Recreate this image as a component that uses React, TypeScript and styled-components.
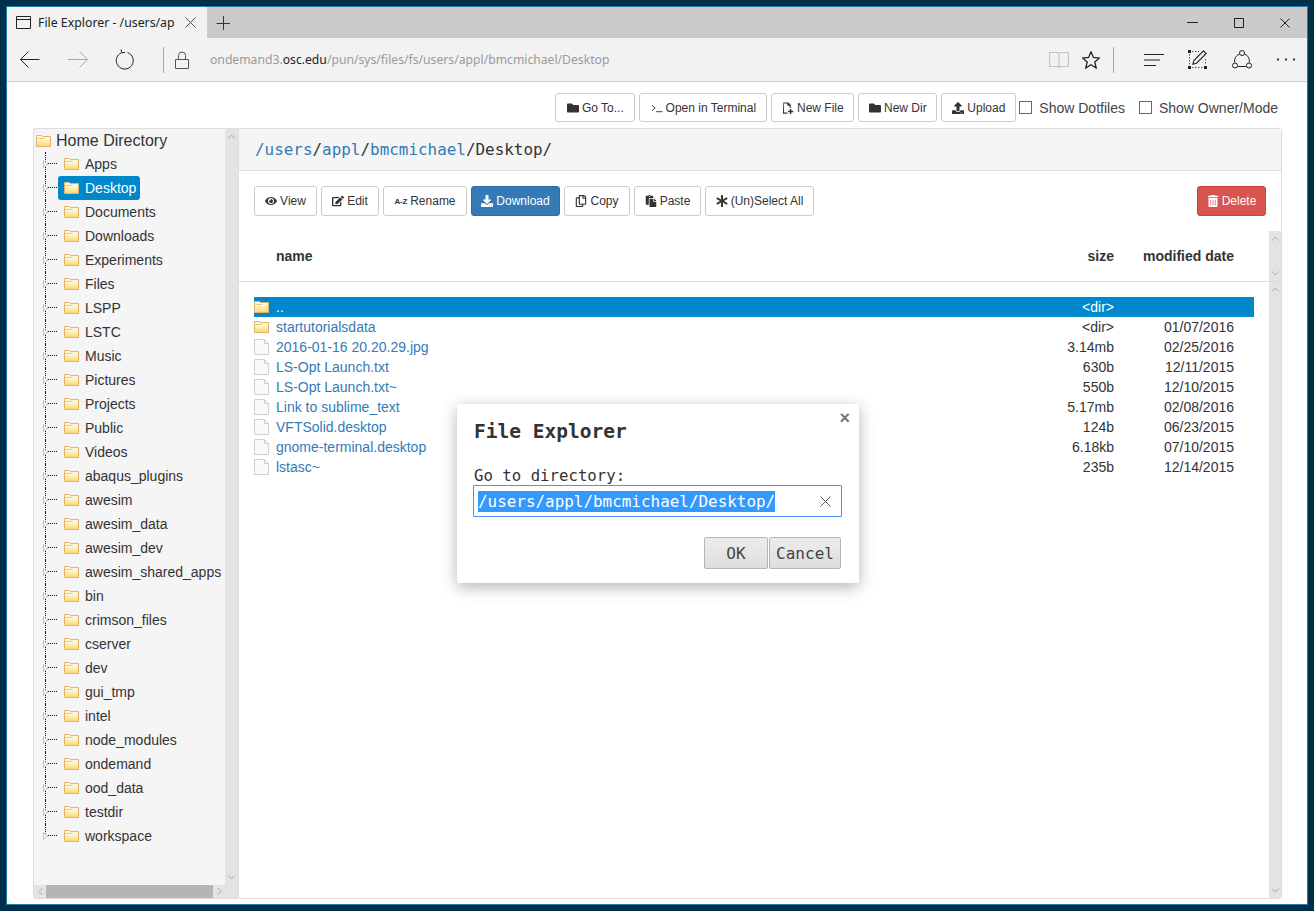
import styled, { createGlobalStyle } from "styled-components";
import {
  FaAsterisk,
  FaDownload,
  FaEdit,
  FaEye,
  FaFolder,
  FaPaste,
  FaRegCopy,
  FaTrashAlt,
  FaUpload,
} from "react-icons/fa";

const GlobalStyle = createGlobalStyle`
  html, body {
    margin: 0;
    padding: 0;
    height: 100%;
    background: #012f47;
    font-family: "Liberation Sans", Arial, sans-serif;
  }
`;

const Frame = styled.div`
  width: 1314px;
  height: 911px;
  box-sizing: border-box;
  padding: 6px;
  background: #012f47;
`;

const Win = styled.div`
  height: 100%;
  box-sizing: border-box;
  border: 1px solid #1b7fa8;
  display: flex;
  flex-direction: column;
  background: #fff;
  position: relative;
`;

const TabStrip = styled.div`
  height: 31px;
  background: #cacaca;
  display: flex;
  align-items: center;
  flex: none;
`;

const Tab = styled.div`
  width: 200px;
  height: 100%;
  box-sizing: border-box;
  background: #f2f2f2;
  display: flex;
  align-items: center;
  padding-left: 9px;
  font-family: "Noto Sans", sans-serif;
  font-size: 12.3px;
  color: #222;
`;

const TabTitle = styled.span`
  margin-left: 7px;
  width: 147px;
  white-space: nowrap;
  overflow: hidden;
`;

const NewTab = styled.div`
  margin-left: 9px;
  display: flex;
`;

const WinControls = styled.div`
  margin-left: auto;
  display: flex;
  align-items: center;
  gap: 36px;
  padding-right: 17px;
`;

const NavBar = styled.div`
  height: 44px;
  box-sizing: border-box;
  flex: none;
  background: #f2f2f2;
  border-bottom: 1px solid #cfcfcf;
  display: flex;
  align-items: center;
  padding-left: 13px;
`;

const NavIcon = styled.div<{ $gap: number }>`
  display: flex;
  margin-left: ${(p) => p.$gap}px;
`;

const NavDivider = styled.div<{ $gap: number }>`
  width: 1px;
  height: 26px;
  background: #a8a8a8;
  margin-left: ${(p) => p.$gap}px;
`;

const Url = styled.div`
  margin-left: 21px;
  font-family: "Noto Sans", sans-serif;
  font-size: 12.18px;
  color: #9a9a9a;
  width: 835px;
  white-space: nowrap;
  b {
    font-weight: 400;
    color: #222;
  }
`;

const Page = styled.div`
  flex: 1;
  min-height: 0;
  display: flex;
  flex-direction: column;
  padding: 11px 25px 5px 26px;
  position: relative;
`;

const TopBar = styled.div`
  height: 29px;
  flex: none;
  margin-bottom: 6px;
  display: flex;
  align-items: center;
  justify-content: flex-end;
  gap: 4px;
  padding-right: 4px;
`;

const Btn = styled.button<{ $kind?: "primary" | "danger"; $w: number }>`
  width: ${(p) => p.$w}px;
  height: 100%;
  box-sizing: border-box;
  padding: 0;
  display: flex;
  align-items: center;
  justify-content: center;
  gap: 3px;
  border-radius: 3px;
  border: 1px solid
    ${(p) =>
      p.$kind === "primary" ? "#2e6da4" : p.$kind === "danger" ? "#d43f3a" : "#ccc"};
  background: ${(p) =>
    p.$kind === "primary" ? "#337ab7" : p.$kind === "danger" ? "#d9534f" : "#fff"};
  color: ${(p) => (p.$kind ? "#fff" : "#333")};
  font-family: "Liberation Sans", Arial, sans-serif;
  font-size: 12px;
  white-space: nowrap;
  svg {
    width: 12px;
    height: 12px;
    flex: none;
  }
`;

const CheckLabel = styled.label<{ $gap: number }>`
  display: flex;
  align-items: center;
  font-size: 14px;
  color: #444;
  margin-left: ${(p) => p.$gap}px;
`;

const CheckBox = styled.span`
  width: 11px;
  height: 11px;
  border: 1px solid #666;
  background: #fff;
  margin-right: 7px;
  display: block;
`;

const Main = styled.div`
  flex: 1;
  min-height: 0;
  display: flex;
`;

const TreePanel = styled.div`
  width: 205px;
  box-sizing: border-box;
  flex: none;
  display: flex;
  flex-direction: column;
  background: #f5f5f5;
  border: 1px solid #ddd;
  border-right: 0;
  border-radius: 3px 0 0 3px;
`;

const TreeBody = styled.div`
  flex: 1;
  min-height: 0;
  display: flex;
`;

const TreeList = styled.div`
  flex: 1;
  min-width: 0;
  overflow: hidden;
`;

const TreeRoot = styled.div`
  height: 23px;
  display: flex;
  align-items: center;
  gap: 5px;
  padding-left: 2px;
  font-size: 16px;
  color: #333;
`;

const TreeRow = styled.div`
  height: 24px;
  display: flex;
  align-items: center;
  padding-left: 11px;
  font-size: 14px;
  color: #333;
`;

const Connector = styled.span<{ $last: boolean }>`
  position: relative;
  width: 13px;
  height: 24px;
  flex: none;
  &::before {
    content: "";
    position: absolute;
    left: 0;
    top: 0;
    height: ${(p) => (p.$last ? "12px" : "24px")};
    border-left: 1px dotted #111;
  }
  &::after {
    content: "";
    position: absolute;
    left: 2px;
    right: 1px;
    top: 11px;
    border-top: 1px dotted #111;
  }
`;

const Arrow = styled.svg`
  position: absolute;
  z-index: 1;
  left: -2px;
  top: 8px;
`;

const TreeLabel = styled.span<{ $active?: boolean }>`
  height: 24px;
  display: flex;
  align-items: center;
  gap: 6px;
  padding: 0 4px 0 6px;
  border-radius: 3px;
  white-space: nowrap;
  background: ${(p) => (p.$active ? "#0088cc" : "transparent")};
  color: ${(p) => (p.$active ? "#fff" : "#333")};
`;

const VScroll = styled.div<{ $w: number; $h?: number }>`
  width: ${(p) => p.$w}px;
  flex: none;
  background: #e3e3e3;
  display: flex;
  flex-direction: column;
  justify-content: space-between;
  align-items: center;
  padding: 5px 0;
  box-sizing: border-box;
  height: ${(p) => (p.$h ? `${p.$h}px` : "auto")};
`;

const HScroll = styled.div`
  height: 13px;
  flex: none;
  background: #e3e3e3;
  display: flex;
  align-items: center;
  padding-left: 4px;
`;

const HThumb = styled.div`
  width: 167px;
  height: 100%;
  margin: 0 4px 0 3px;
  background: #b5b5b5;
`;

const FilePanel = styled.div`
  flex: 1;
  min-width: 0;
  display: flex;
  flex-direction: column;
  border: 1px solid #ddd;
  border-radius: 0 3px 3px 0;
`;

const PathHead = styled.div`
  height: 42px;
  box-sizing: border-box;
  flex: none;
  display: flex;
  align-items: center;
  padding-left: 16px;
  background: #f5f5f5;
  border-bottom: 1px solid #ddd;
  font-family: "DejaVu Sans Mono", monospace;
  font-size: 15.93px;
  color: #333;
  a {
    color: #337ab7;
  }
`;

const ActionBar = styled.div`
  height: 60px;
  flex: none;
  box-sizing: border-box;
  padding: 15px;
  display: flex;
  align-items: stretch;
  gap: 4px;
`;

const DeleteBtn = styled(Btn)`
  margin-left: auto;
`;

const SortGlyph = styled.span`
  font-size: 8px;
  font-weight: 700;
  letter-spacing: -0.2px;
`;

const HeadRow = styled.div`
  height: 51px;
  flex: none;
  box-sizing: border-box;
  display: flex;
  border-bottom: 1px solid #ddd;
`;

const HeadCols = styled.div`
  flex: 1;
  display: flex;
  align-items: center;
  height: 50px;
  padding: 0 35px 0 37px;
  font-size: 14px;
  font-weight: 700;
  color: #333;
`;

const ColName = styled.div`
  flex: 1;
  min-width: 0;
  white-space: nowrap;
`;

const ColSize = styled.div`
  width: 100px;
  text-align: right;
`;

const ColDate = styled.div`
  width: 120px;
  text-align: right;
`;

const BodyWrap = styled.div`
  flex: 1;
  min-height: 0;
  display: flex;
`;

const Rows = styled.div`
  flex: 1;
  min-width: 0;
  padding: 15px 15px 0 15px;
  box-sizing: border-box;
`;

const Row = styled.div<{ $active?: boolean }>`
  height: 20px;
  display: flex;
  align-items: center;
  padding-right: 20px;
  font-size: 14px;
  color: ${(p) => (p.$active ? "#fff" : "#333")};
  background: ${(p) => (p.$active ? "#0088cc" : "transparent")};
`;

const RowIcon = styled.span`
  width: 22px;
  display: flex;
  flex: none;
`;

const FileLink = styled.a<{ $active?: boolean }>`
  color: ${(p) => (p.$active ? "#fff" : "#337ab7")};
`;

const Modal = styled.div`
  position: absolute;
  left: 450px;
  top: 397px;
  width: 402px;
  height: 179px;
  box-sizing: border-box;
  background: #fff;
  border-radius: 2px;
  box-shadow: 0 4px 16px rgba(0, 0, 0, 0.3);
  padding: 16px 17px 14px 17px;
  font-family: "DejaVu Sans Mono", monospace;
  color: #333;
  display: flex;
  flex-direction: column;
`;

const ModalClose = styled.span`
  position: absolute;
  top: 5px;
  right: 9px;
  font-family: "Liberation Sans", sans-serif;
  font-size: 18px;
  font-weight: 700;
  line-height: 18px;
  color: #777;
`;

const ModalTitle = styled.div`
  font-size: 19.5px;
  font-weight: 700;
  line-height: 24px;
`;

const ModalLabel = styled.div`
  margin-top: 22px;
  font-size: 15.7px;
  line-height: 19px;
`;

const InputBox = styled.div`
  height: 32px;
  margin-left: -1px;
  box-sizing: border-box;
  border: 1px solid #4d90fe;
  border-radius: 1px;
  display: flex;
  align-items: center;
  padding: 0 10px 0 4px;
  font-size: 15.93px;
  justify-content: space-between;
`;

const Selected = styled.span`
  background: #3399ff;
  color: #fff;
  line-height: 21px;
`;

const ModalActions = styled.div`
  margin-top: 20px;
  margin-right: 1px;
  display: flex;
  justify-content: flex-end;
  gap: 1px;
`;

const ModalBtn = styled.button<{ $w: number }>`
  width: ${(p) => p.$w}px;
  height: 32px;
  border: 1px solid #b5b5b5;
  border-radius: 2px;
  background: linear-gradient(#ededed, #dedede);
  font-family: "DejaVu Sans Mono", monospace;
  font-size: 16px;
  color: #444;
  padding: 0;
`;

const treeItems = [
  "Apps", "Desktop", "Documents", "Downloads", "Experiments", "Files", "LSPP", "LSTC",
  "Music", "Pictures", "Projects", "Public", "Videos", "abaqus_plugins", "awesim",
  "awesim_data", "awesim_dev", "awesim_shared_apps", "bin", "crimson_files", "cserver",
  "dev", "gui_tmp", "intel", "node_modules", "ondemand", "ood_data", "testdir", "workspace",
];

const files = [
  { name: "..", size: "<dir>", date: "", dir: true, active: true },
  { name: "startutorialsdata", size: "<dir>", date: "01/07/2016", dir: true },
  { name: "2016-01-16 20.20.29.jpg", size: "3.14mb", date: "02/25/2016" },
  { name: "LS-Opt Launch.txt", size: "630b", date: "12/11/2015" },
  { name: "LS-Opt Launch.txt~", size: "550b", date: "12/10/2015" },
  { name: "Link to sublime_text", size: "5.17mb", date: "02/08/2016" },
  { name: "VFTSolid.desktop", size: "124b", date: "06/23/2015" },
  { name: "gnome-terminal.desktop", size: "6.18kb", date: "07/10/2015" },
  { name: "lstasc~", size: "235b", date: "12/14/2015" },
];

const FolderIcon = () => (
  <svg width="15" height="12" viewBox="0 0 15 12" style={{ flex: "none" }}>
    <defs>
      <linearGradient id="fold" x1="0" y1="0" x2="0" y2="1">
        <stop offset="0" stopColor="#fffbe6" />
        <stop offset="0.5" stopColor="#fff0b0" />
        <stop offset="1" stopColor="#f9d86e" />
      </linearGradient>
    </defs>
    <path d="M0.5 0.5h5l1 1h8v10h-14z" fill="url(#fold)" stroke="#e3b26c" />
    <path d="M1.5 3.5h7" stroke="#e8c880" />
    <path d="M1.5 4.5h12" stroke="#fffdf0" />
  </svg>
);

const PageIcon = () => (
  <svg width="15" height="16" viewBox="0 0 15 16">
    <path d="M0.5 0.5h10l4 4v11h-14z" fill="#fafafa" stroke="#cfcfcf" />
    <path d="M10.5 0.5v4h4" fill="none" stroke="#cfcfcf" />
  </svg>
);

const Chevron = ({ up }: { up?: boolean }) => (
  <svg width="9" height="5" viewBox="0 0 9 5">
    <path d={up ? "M1 4.5l3.5-3.5 3.5 3.5" : "M1 .5l3.5 3.5 3.5-3.5"} fill="none" stroke="#a8a8a8" />
  </svg>
);

const SideChevron = ({ left }: { left?: boolean }) => (
  <svg width="5" height="9" viewBox="0 0 5 9">
    <path d={left ? "M4.5 1l-3.5 3.5 3.5 3.5" : "M.5 1l3.5 3.5-3.5 3.5"} fill="none" stroke="#a8a8a8" />
  </svg>
);

const Line = ({ w, h, d, color = "#222", sw = 1 }: { w: number; h: number; d: string; color?: string; sw?: number }) => (
  <svg width={w} height={h} viewBox={`0 0 ${w} ${h}`} fill="none" stroke={color} strokeWidth={sw}>
    <path d={d} />
  </svg>
);

const NoteIcon = () => (
  <svg width="19" height="19" viewBox="0 0 19 19">
    <g fill="#222">
      <rect x="0" y="0" width="3" height="3" />
      <rect x="16" y="16" width="3" height="3" />
      <rect x="0" y="16" width="3" height="3" />
    </g>
    <path d="M4 1.5h7M1.5 4v11M4 17.5h11M17.5 9v6" fill="none" stroke="#555" strokeDasharray="1.5 1.5" />
    <path d="M15.5 .8l2.7 2.7-9.7 9.7-3.6 1 1-3.7z" fill="none" stroke="#222" strokeWidth="1.1" />
  </svg>
);

const ShareIcon = () => (
  <svg width="20" height="19" viewBox="0 0 20 19" fill="none" stroke="#222">
    <path d="M12.5 4a8 8 0 0 1 4.8 8.5M2.7 12.5A8 8 0 0 1 7.5 4M5.5 16.5h9" />
    <circle cx="10" cy="3" r="2.5" fill="#f2f2f2" />
    <circle cx="3" cy="15.5" r="2.5" fill="#f2f2f2" />
    <circle cx="17" cy="15.5" r="2.5" fill="#f2f2f2" />
  </svg>
);

const NewFileIcon = () => (
  <svg viewBox="0 0 12 13">
    <path d="M1 0.5h5.5l2.5 2.5v3.5h-1.2v-2.5h-2.5v-2.3h-3.6v9.8h3.6v1.2h-4.8z" fill="#333" />
    <path d="M8 7.5h1.6v2h2v1.6h-2v1.9h-1.6v-1.9h-2v-1.6h2z" fill="#333" />
  </svg>
);

const TerminalIcon = () => (
  <svg viewBox="0 0 13 11" fill="none" stroke="#333">
    <path d="M1 2.5l3.5 3-3.5 3" />
    <path d="M5.5 9.5h7" />
  </svg>
);

export default function App() {
  return (
    <>
      <GlobalStyle />
      <Frame>
        <Win>
          <TabStrip>
            <Tab>
              <Line w={15} h={13} d="M.5 .5h14v12h-14zM.5 3.5h14" color="#222" />
              <TabTitle>File Explorer - /users/ap</TabTitle>
              <Line w={11} h={11} d="M.5 .5l10 10M10.5 .5l-10 10" color="#555" />
            </Tab>
            <NewTab>
              <Line w={14} h={14} d="M7.5 0v14M.5 7.5h14" color="#333" />
            </NewTab>
            <WinControls>
              <Line w={11} h={3} d="M0 1.5h11" />
              <Line w={10} h={10} d="M.5 .5h9v9h-9z" />
              <Line w={10} h={10} d="M.5 .5l9 9M9.5 .5l-9 9" />
            </WinControls>
          </TabStrip>
          <NavBar>
            <NavIcon $gap={0}>
              <Line w={20} h={17} d="M0.5 8.5h19M8.5 .5l-8 8 8 8" />
            </NavIcon>
            <NavIcon $gap={28}>
              <Line w={20} h={17} d="M0 8.5h19M11.5 .5l8 8-8 8" color="#aaa" />
            </NavIcon>
            <NavIcon $gap={27}>
              <Line w={20} h={21} d="M12.5 3.5a8.5 8.5 0 1 1-6 .2M6 .5l.8 3.4 3.4 -.6" />
            </NavIcon>
            <NavDivider $gap={28} />
            <NavIcon $gap={11}>
              <Line w={14} h={18} d="M.5 8.5h13v9h-13zM3.5 8.5v-4a3.5 3.5 0 0 1 7 0v4" color="#555" />
            </NavIcon>
            <Url>
              ondemand3.<b>osc.edu</b>/pun/sys/files/fs/users/appl/bmcmichael/Desktop
            </Url>
            <NavIcon $gap={4}>
              <Line w={20} h={17} d="M.5 1.5h8l1.5 1 1.5-1h8v14h-8l-1.5 1-1.5-1h-8zM10 2.5v13" color="#c4c4c4" sw={1.2} />
            </NavIcon>
            <NavIcon $gap={13}>
              <Line w={18} h={18} d="M9 .8l2.4 5.7 6 .5-4.6 4 1.4 6-5.2-3.2-5.2 3.2 1.4-6-4.6-4 6-.5z" sw={1.3} />
            </NavIcon>
            <NavDivider $gap={13} />
            <NavIcon $gap={30}>
              <Line w={20} h={12} d="M0 .5h20M0 6h16M0 11.5h12" />
            </NavIcon>
            <NavIcon $gap={24}>
              <NoteIcon />
            </NavIcon>
            <NavIcon $gap={25}>
              <ShareIcon />
            </NavIcon>
            <NavIcon $gap={25}>
              <svg width="18" height="3" viewBox="0 0 18 3" fill="#333">
                <rect x="0" y="0.5" width="2" height="2" />
                <rect x="8" y="0.5" width="2" height="2" />
                <rect x="16" y="0.5" width="2" height="2" />
              </svg>
            </NavIcon>
          </NavBar>
          <Page>
            <TopBar>
              <Btn $w={80}><FaFolder />Go To...</Btn>
              <Btn $w={128}><TerminalIcon />Open in Terminal</Btn>
              <Btn $w={83}><NewFileIcon />New File</Btn>
              <Btn $w={79}><FaFolder />New Dir</Btn>
              <Btn $w={75}><FaUpload />Upload</Btn>
              <CheckLabel $gap={-1}><CheckBox />Show Dotfiles</CheckLabel>
              <CheckLabel $gap={10}><CheckBox />Show Owner/Mode</CheckLabel>
            </TopBar>
            <Main>
              <TreePanel>
                <TreeBody>
                  <TreeList>
                    <TreeRoot><FolderIcon />Home Directory</TreeRoot>
                    {treeItems.map((item, i) => (
                      <TreeRow key={item}>
                        <Connector $last={i === treeItems.length - 1}>
                          <Arrow width="6" height="8" viewBox="0 0 6 8">
                            <path d="M.5 .5l4.5 3.5-4.5 3.5z" fill="#f5f5f5" stroke="#c4c4c4" />
                          </Arrow>
                        </Connector>
                        <TreeLabel $active={item === "Desktop"}>
                          <FolderIcon />
                          {item}
                        </TreeLabel>
                      </TreeRow>
                    ))}
                  </TreeList>
                  <VScroll $w={13}><Chevron up /><Chevron /></VScroll>
                </TreeBody>
                <HScroll>
                  <SideChevron left />
                  <HThumb />
                  <SideChevron />
                </HScroll>
              </TreePanel>
              <FilePanel>
                <PathHead>
                  <a>/users</a>/<a>appl</a>/<a>bmcmichael</a>/Desktop/
                </PathHead>
                <ActionBar>
                  <Btn $w={63}><FaEye />View</Btn>
                  <Btn $w={58}><FaEdit />Edit</Btn>
                  <Btn $w={84}><SortGlyph>A-Z</SortGlyph>Rename</Btn>
                  <Btn $w={89} $kind="primary"><FaDownload />Download</Btn>
                  <Btn $w={66}><FaRegCopy />Copy</Btn>
                  <Btn $w={67}><FaPaste />Paste</Btn>
                  <Btn $w={109}><FaAsterisk />(Un)Select All</Btn>
                  <DeleteBtn $w={69} $kind="danger"><FaTrashAlt />Delete</DeleteBtn>
                </ActionBar>
                <HeadRow>
                  <HeadCols>
                    <ColName>name</ColName>
                    <ColSize>size</ColSize>
                    <ColDate>modified date</ColDate>
                  </HeadCols>
                  <VScroll $w={12} $h={50}><Chevron up /><Chevron /></VScroll>
                </HeadRow>
                <BodyWrap>
                  <Rows>
                    {files.map((f) => (
                      <Row key={f.name} $active={f.active}>
                        <RowIcon>{f.dir ? <FolderIcon /> : <PageIcon />}</RowIcon>
                        <ColName><FileLink $active={f.active}>{f.name}</FileLink></ColName>
                        <ColSize>{f.size}</ColSize>
                        <ColDate>{f.date}</ColDate>
                      </Row>
                    ))}
                  </Rows>
                  <VScroll $w={12}><Chevron up /><Chevron /></VScroll>
                </BodyWrap>
              </FilePanel>
            </Main>
          </Page>
          <Modal>
            <ModalClose>×</ModalClose>
            <ModalTitle>File Explorer</ModalTitle>
            <ModalLabel>Go to directory:</ModalLabel>
            <InputBox>
              <Selected>/users/appl/bmcmichael/Desktop/</Selected>
              <Line w={11} h={11} d="M.5 .5l10 10M10.5 .5l-10 10" color="#555" />
            </InputBox>
            <ModalActions>
              <ModalBtn $w={64}>OK</ModalBtn>
              <ModalBtn $w={72}>Cancel</ModalBtn>
            </ModalActions>
          </Modal>
        </Win>
      </Frame>
    </>
  );
}
